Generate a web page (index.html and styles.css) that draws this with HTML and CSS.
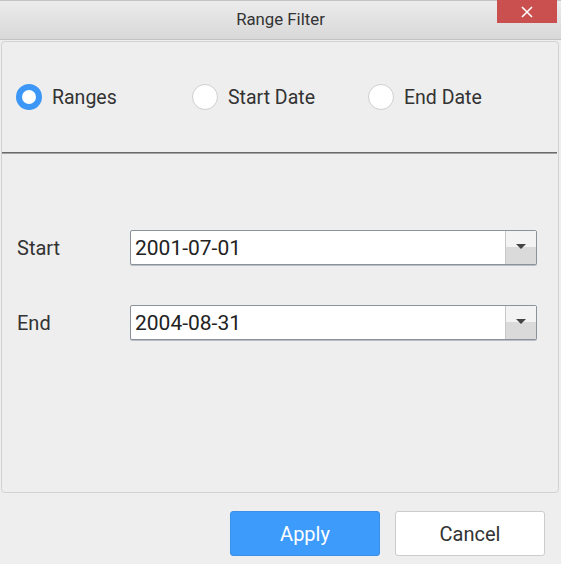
FILE: index.html
```html
<!DOCTYPE html>
<html>
<head>
<meta charset="utf-8">
<link rel="stylesheet" href="styles.css">
</head>
<body>
<div class="window">
  <div class="titlebar">
    <div></div>
    <div class="title">Range Filter</div>
    <div class="close"><svg width="12" height="12" viewBox="0 0 12 12"><path d="M1 1L11 11M11 1L1 11" stroke="#fff" stroke-width="1.6"/></svg></div>
  </div>
  <div class="panel">
    <div class="radios">
      <label class="opt"><span class="radio checked"></span><span class="otext">Ranges</span></label>
      <label class="opt"><span class="radio"></span><span class="otext">Start Date</span></label>
      <label class="opt"><span class="radio"></span><span class="otext">End Date</span></label>
    </div>
    <div class="sep"></div>
    <div class="fields">
      <div class="row">
        <div class="lbl">Start</div>
        <div class="combo"><div class="val">2001-07-01</div><div class="btn"><span class="arrow"></span></div></div>
      </div>
      <div class="row">
        <div class="lbl">End</div>
        <div class="combo"><div class="val">2004-08-31</div><div class="btn"><span class="arrow"></span></div></div>
      </div>
    </div>
  </div>
  <div class="footer">
    <button class="apply">Apply</button>
    <button class="cancel">Cancel</button>
  </div>
</div>
</body>
</html>
```
FILE: styles.css
```css
html, body { margin: 0; padding: 0; }
body { background: #eeeeee; font-family: Roboto, "Noto Sans", sans-serif; color: #333; }
.window { width: 561px; height: 564px; box-sizing: border-box; display: flex; flex-direction: column; }
.titlebar {
  height: 40px; box-sizing: border-box;
  border-top: 1px solid #c4c4c4; border-bottom: 1px solid #c2c2c2;
  background: linear-gradient(#ececec, #d8d8d8);
  display: grid; grid-template-columns: 1fr auto 1fr;
}
.title { font-size: 16.8px; color: #333; align-self: center; padding-bottom: 2px; }
.close {
  justify-self: end; width: 60px; height: 23px; margin-right: 4px; margin-top: -1px;
  background: #c9504f; display: flex; align-items: center; justify-content: center;
}
.panel {
  margin: 1px 2px 0 1px; height: 452px; box-sizing: border-box;
  border: 1px solid #d2d2d2; border-radius: 4px; background: #eeeeee;
  display: flex; flex-direction: column;
}
.radios { height: 110px; display: flex; align-items: center; padding-left: 14px; }
.opt { width: 176px; display: flex; align-items: center; gap: 10px; font-size: 19.5px; color: #333; }
.otext { padding-top: 1px; }
.radio {
  width: 26px; height: 26px; box-sizing: border-box; border-radius: 50%;
  background: #fff; border: 1px solid #cfcfcf;
}
.radio.checked { border: 6px solid #3d97f6; }
.sep { height: 0; border-top: 1px solid #6a6a6a; border-bottom: 1px solid #a3a3a3; margin-right: 1px; }
.fields { padding: 76px 0 0 15px; display: flex; flex-direction: column; gap: 40px; }
.row { display: flex; align-items: center; }
.lbl { width: 113px; font-size: 20px; color: #333; padding-top: 1px; }
.combo {
  width: 407px; height: 35px; box-sizing: border-box; display: flex;
  border: 1px solid #8a939c; border-radius: 2px; background: #fff;
  box-shadow: 0 1px 0 #b8bec4;
}
.val { flex: 1; font-size: 21px; color: #222; padding-left: 4px; padding-top: 1px; display: flex; align-items: center; }
.btn {
  width: 30px; border-left: 1px solid #c8c8c8;
  background: linear-gradient(#f3f3f3 0%, #f3f3f3 50%, #dadada 50%, #dadada 100%);
  display: flex; align-items: center; justify-content: center;
}
.arrow { width: 0; height: 0; border-left: 5px solid transparent; border-right: 5px solid transparent; border-top: 5px solid #444; margin-bottom: 2px; }
.footer { display: flex; justify-content: flex-end; gap: 15px; padding: 18px 16px 0 0; }
button { font-family: Roboto, "Noto Sans", sans-serif; font-size: 20px; width: 150px; height: 45px; border-radius: 3px; cursor: pointer; }
.apply { background: #3d9bfc; color: #fff; border: 1px solid #3a8fe8; }
.cancel { background: #fff; color: #333; border: 1px solid #cccccc; }
```
